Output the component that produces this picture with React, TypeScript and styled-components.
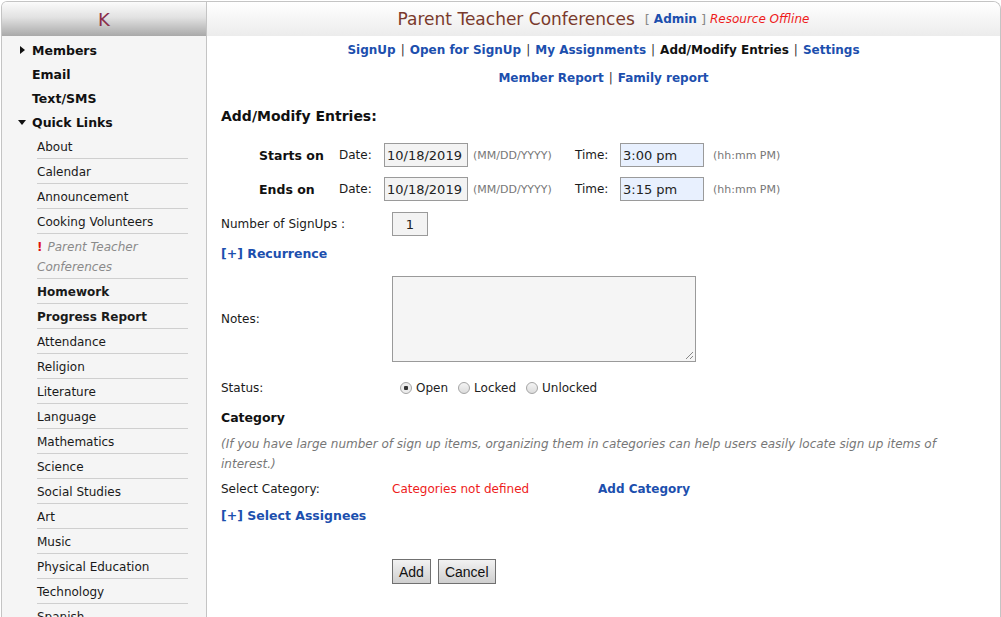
import styled, { createGlobalStyle } from "styled-components";

const GlobalStyle = createGlobalStyle`
  html, body {
    margin: 0;
    padding: 0;
    background: #ffffff;
    overflow: hidden;
  }
  body {
    font-family: Verdana, "DejaVu Sans", sans-serif;
    font-size: 12px;
    color: #1a1a1a;
  }
`;

const BLUE = "#1c4fae";

type SideItem = { label: string; bold?: boolean; pending?: boolean };

const quickLinks: SideItem[] = [
  { label: "About" },
  { label: "Calendar" },
  { label: "Announcement" },
  { label: "Cooking Volunteers" },
  { label: "Parent Teacher Conferences", pending: true },
  { label: "Homework", bold: true },
  { label: "Progress Report", bold: true },
  { label: "Attendance" },
  { label: "Religion" },
  { label: "Literature" },
  { label: "Language" },
  { label: "Mathematics" },
  { label: "Science" },
  { label: "Social Studies" },
  { label: "Art" },
  { label: "Music" },
  { label: "Physical Education" },
  { label: "Technology" },
  { label: "Spanish" },
];

const Caret = ({ open }: { open?: boolean }) => (
  <CaretBox>
    <svg width="8" height="8" viewBox="0 0 8 8">
      {open ? (
        <polygon points="0,2 8,2 4,7" fill="#111" />
      ) : (
        <polygon points="2,0 7,4 2,8" fill="#111" />
      )}
    </svg>
  </CaretBox>
);

const Radio = ({ checked, label }: { checked?: boolean; label: string }) => (
  <RadioLabel>
    <RadioDot $checked={checked} />
    {label}
  </RadioLabel>
);

export default function App() {
  return (
    <>
      <GlobalStyle />
      <Page>
        <Sidebar>
          <SideHeader>K</SideHeader>
          <TopList>
            <TopItem>
              <Caret />
              Members
            </TopItem>
            <TopItem>Email</TopItem>
            <TopItem>Text/SMS</TopItem>
            <TopItem>
              <Caret open />
              Quick Links
            </TopItem>
          </TopList>
          <SubList>
            {quickLinks.map((item) => (
              <SubItem key={item.label} $bold={item.bold} $pending={item.pending}>
                {item.pending && <Bang>!</Bang>}
                {item.label}
              </SubItem>
            ))}
          </SubList>
        </Sidebar>

        <Main>
          <MainHeader>
            <Title>Parent Teacher Conferences</Title>
            <Bracket>[</Bracket>
            <Link>Admin</Link>
            <Bracket>]</Bracket>
            <Offline>Resource Offline</Offline>
          </MainHeader>

          <Nav>
            <Link>SignUp</Link>
            <Sep>|</Sep>
            <Link>Open for SignUp</Link>
            <Sep>|</Sep>
            <Link>My Assignments</Link>
            <Sep>|</Sep>
            <Current>Add/Modify Entries</Current>
            <Sep>|</Sep>
            <Link>Settings</Link>
          </Nav>
          <Nav>
            <Link>Member Report</Link>
            <Sep>|</Sep>
            <Link>Family report</Link>
          </Nav>

          <Form>
            <Heading>Add/Modify Entries:</Heading>

            <DateRow>
              <RowLabel>Starts on</RowLabel>
              <FieldLabel>Date:</FieldLabel>
              <TextBox $w={84}>10/18/2019</TextBox>
              <Hint $w={102}>(MM/DD/YYYY)</Hint>
              <FieldLabel>Time:</FieldLabel>
              <TextBox $w={84} $tint>3:00 pm</TextBox>
              <Hint $w={90} $gap={9}>(hh:mm PM)</Hint>
            </DateRow>
            <DateRow>
              <RowLabel>Ends on</RowLabel>
              <FieldLabel>Date:</FieldLabel>
              <TextBox $w={84}>10/18/2019</TextBox>
              <Hint $w={102}>(MM/DD/YYYY)</Hint>
              <FieldLabel>Time:</FieldLabel>
              <TextBox $w={84} $tint>3:15 pm</TextBox>
              <Hint $w={90} $gap={9}>(hh:mm PM)</Hint>
            </DateRow>

            <FormRow $h={36}>
              <ColLabel>Number of SignUps :</ColLabel>
              <TextBox $w={36} $center>1</TextBox>
            </FormRow>

            <ToggleLink $top={1}>[+] Recurrence</ToggleLink>

            <FormRow $h={90} $top={9}>
              <ColLabel>Notes:</ColLabel>
              <Notes />
            </FormRow>

            <FormRow $h={28} $top={10}>
              <ColLabel>Status:</ColLabel>
              <RadioGroup>
                <Radio checked label="Open" />
                <Radio label="Locked" />
                <Radio label="Unlocked" />
              </RadioGroup>
            </FormRow>

            <SubHeading>Category</SubHeading>
            <Explain>
              (If you have large number of sign up items, organizing them in categories can help
              users easily locate sign up items of interest.)
            </Explain>

            <FormRow $h={26}>
              <ColLabel>Select Category:</ColLabel>
              <Missing>Categories not defined</Missing>
              <Link>Add Category</Link>
            </FormRow>

            <ToggleLink $top={3}>[+] Select Assignees</ToggleLink>

            <Buttons>
              <Button>Add</Button>
              <Button>Cancel</Button>
            </Buttons>
          </Form>
        </Main>
      </Page>
    </>
  );
}

const Page = styled.div`
  display: grid;
  grid-template-columns: 206px 794px;
  height: 616px;
  margin-top: 1px;
  margin-left: 1px;
`;

const Sidebar = styled.aside`
  display: flex;
  flex-direction: column;
  background: #f5f5f5;
  border: 1px solid #c4c4c4;
  border-bottom: none;
  border-top-left-radius: 6px;
  overflow: hidden;
`;

const SideHeader = styled.div`
  flex-shrink: 0;
  height: 34px;
  display: flex;
  align-items: center;
  justify-content: center;
  background: linear-gradient(#fbfbfb, #e2e2e2 45%, #a9a9a9);
  color: #8a2d4a;
  font-size: 18px;
`;

const TopList = styled.div`
  flex-shrink: 0;
  display: flex;
  flex-direction: column;
  padding-top: 2px;
`;

const CaretBox = styled.span`
  display: inline-flex;
  width: 14px;
  margin-left: -14px;
  align-items: center;
`;

const TopItem = styled.div`
  height: 24px;
  display: flex;
  align-items: center;
  padding-left: 30px;
  font-weight: bold;
  font-size: 12.5px;
  color: #111;
`;

const SubList = styled.div`
  flex-shrink: 0;
  display: flex;
  flex-direction: column;
  margin-left: 35px;
  width: 151px;
`;

const SubItem = styled.div<{ $bold?: boolean; $pending?: boolean }>`
  flex-shrink: 0;
  min-height: 25px;
  line-height: 20px;
  padding: 3px 0 1px;
  box-sizing: border-box;
  border-bottom: 1px solid #cfcfcf;
  font-weight: ${({ $bold }) => ($bold ? "bold" : "normal")};
  font-style: ${({ $pending }) => ($pending ? "italic" : "normal")};
  color: ${({ $pending }) => ($pending ? "#8a8a8a" : "#1a1a1a")};
  white-space: ${({ $pending }) => ($pending ? "normal" : "nowrap")};
`;

const Bang = styled.span`
  color: #e01010;
  font-weight: bold;
  font-style: normal;
  margin-right: 5px;
`;

const Main = styled.main`
  display: flex;
  flex-direction: column;
  border: 1px solid #c4c4c4;
  border-left: none;
  border-bottom: none;
  border-top-right-radius: 8px;
  overflow: hidden;
`;

const MainHeader = styled.header`
  flex-shrink: 0;
  height: 34px;
  display: flex;
  align-items: center;
  justify-content: center;
  gap: 4px;
  background: linear-gradient(#ffffff, #ececec);
`;

const Title = styled.span`
  color: #7a3a2c;
  font-size: 17px;
  margin-right: 6px;
`;

const Bracket = styled.span`
  color: #888;
  font-size: 13px;
`;

const Offline = styled.span`
  color: #ee1c1c;
  font-style: italic;
  font-size: 12px;
`;

const Link = styled.span`
  color: ${BLUE};
  font-weight: bold;
  cursor: pointer;
`;

const Current = styled.span`
  color: #111;
  font-weight: bold;
`;

const Sep = styled.span`
  color: #333;
  margin: 0 5px;
`;

const Nav = styled.nav`
  flex-shrink: 0;
  text-align: center;
  height: 28px;
  line-height: 28px;
`;

const Form = styled.section`
  display: flex;
  flex-direction: column;
  padding: 12px 14px 0;
`;

const Heading = styled.h2`
  margin: 0 0 10px;
  font-size: 14px;
  font-weight: bold;
  color: #111;
  height: 24px;
  line-height: 24px;
`;

const DateRow = styled.div`
  display: flex;
  align-items: center;
  height: 34px;
  padding-left: 38px;
`;

const RowLabel = styled.span`
  width: 80px;
  font-weight: bold;
  font-size: 12.5px;
  color: #111;
`;

const FieldLabel = styled.span`
  width: 45px;
`;

const TextBox = styled.div<{ $w: number; $tint?: boolean; $center?: boolean }>`
  width: ${({ $w }) => $w}px;
  height: 24px;
  box-sizing: border-box;
  border: 1px solid #9a9a9a;
  background: ${({ $tint }) => ($tint ? "#e8f0fe" : "#f3f3f3")};
  display: flex;
  align-items: center;
  justify-content: ${({ $center }) => ($center ? "center" : "flex-start")};
  padding: 0 2px;
  font-size: 13px;
  color: #222;
`;

const Hint = styled.span<{ $w: number; $gap?: number }>`
  width: ${({ $w }) => $w}px;
  padding-left: ${({ $gap }) => $gap ?? 5}px;
  color: #777;
  font-size: 11px;
`;

const FormRow = styled.div<{ $h: number; $top?: number }>`
  display: flex;
  align-items: center;
  min-height: ${({ $h }) => $h}px;
  margin-top: ${({ $top }) => $top ?? 0}px;
`;

const ColLabel = styled.span`
  width: 171px;
  flex-shrink: 0;
`;

const ToggleLink = styled(Link)<{ $top?: number }>`
  height: 22px;
  line-height: 22px;
  margin-top: ${({ $top }) => $top ?? 0}px;
  font-size: 12.5px;
`;

const Notes = styled.div`
  width: 304px;
  height: 86px;
  box-sizing: border-box;
  border: 1px solid #9a9a9a;
  background: #f5f5f5;
  position: relative;

  &::after {
    content: "";
    position: absolute;
    right: 2px;
    bottom: 2px;
    width: 7px;
    height: 7px;
    background: linear-gradient(
      135deg,
      transparent 45%,
      #888 45%,
      #888 52%,
      transparent 52%,
      transparent 72%,
      #888 72%,
      #888 80%,
      transparent 80%
    );
  }
`;

const RadioGroup = styled.div`
  display: flex;
  gap: 10px;
  padding-left: 8px;
`;

const RadioLabel = styled.label`
  display: inline-flex;
  align-items: center;
  gap: 4px;
  color: #222;
`;

const RadioDot = styled.span<{ $checked?: boolean }>`
  width: 12px;
  height: 12px;
  border-radius: 50%;
  box-sizing: border-box;
  border: 1px solid #a4a4a4;
  background: ${({ $checked }) =>
    $checked
      ? "radial-gradient(circle, #333 0 2px, #ececec 2.5px)"
      : "linear-gradient(#f4f4f4, #dcdcdc)"};
`;

const SubHeading = styled.div`
  font-weight: bold;
  font-size: 12.5px;
  color: #111;
  margin-top: 5px;
  height: 22px;
  line-height: 22px;
`;

const Explain = styled.p`
  margin: 5px 0 2px;
  font-style: italic;
  color: #777;
  line-height: 20px;
  max-width: 730px;
`;

const Missing = styled.span`
  width: 206px;
  color: #ee1c1c;
`;

const Buttons = styled.div`
  display: flex;
  gap: 7px;
  margin-top: 32px;
  padding-left: 171px;
`;

const Button = styled.button`
  height: 25px;
  padding: 0 6px;
  border: 1px solid #707070;
  border-radius: 0;
  background: linear-gradient(#f2f2f2, #cfcfcf);
  font-family: Arial, "Liberation Sans", sans-serif;
  font-size: 14px;
  color: #111;
`;
